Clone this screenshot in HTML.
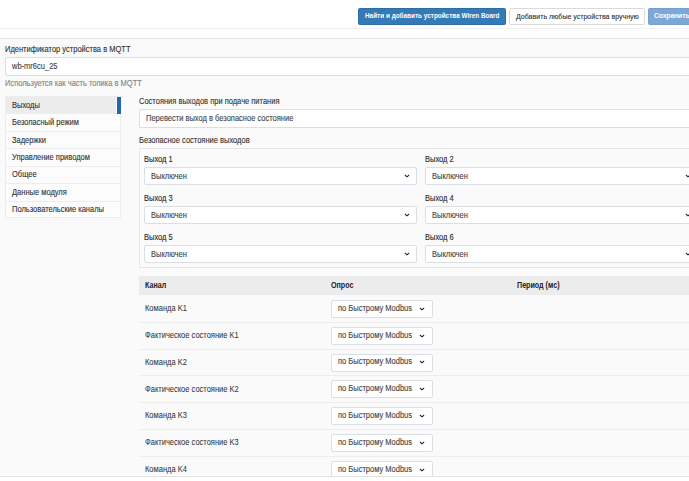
<!DOCTYPE html>
<html><head><meta charset="utf-8">
<style>
html,body{margin:0;padding:0;width:689px;height:481px;overflow:hidden;background:#fff;}
body{position:relative;font-family:"Liberation Sans",sans-serif;color:#333;}
.bx{position:absolute;}
.t{position:absolute;white-space:nowrap;font-size:8.3px;line-height:10px;transform:scaleX(0.905);transform-origin:0 0;-webkit-text-stroke:0.12px currentColor;}
.btn{position:absolute;top:8px;height:17px;box-sizing:border-box;border:1px solid;border-radius:1.5px;}
.inp{position:absolute;box-sizing:border-box;background:#fff;border:1px solid #dadfe5;border-radius:2px;}
.chev{position:absolute;}
</style></head>
<body>
<div class="bx" style="left:0;top:28px;width:689px;height:1px;background:#f1f1f1"></div>
<div class="bx" style="left:0;top:38px;width:689px;height:1px;background:#e6e6e6"></div>
<div class="bx" style="left:0;top:39px;width:689px;height:436px;background:#fafafa"></div>
<div class="bx" style="left:0;top:476px;width:689px;height:1px;background:#e0e0e0"></div>
<div class="btn" style="left:358px;width:148px;background:#337ab7;border-color:#2e6da4;"></div>
<div class="t" style="left:364.8px;top:11.36px;color:#fff;font-weight:bold;font-size:7.9px;transform:scaleX(0.81);-webkit-text-stroke:0">Найти и добавить устройства Wiren Board</div>
<div class="btn" style="left:509px;width:136px;background:#fff;border-color:#dadada;"></div>
<div class="t" style="left:515.6px;top:11.77px;color:#333;font-size:7.6px;transform:scaleX(0.925)">Добавить любые устройства вручную</div>
<div class="btn" style="left:648px;width:60px;background:#7ea7d3;border-color:#74a0cf;"></div>
<div class="t" style="left:654px;top:11.36px;color:#fff;font-weight:bold;font-size:7.9px;transform:scaleX(0.84);-webkit-text-stroke:0">Сохранить</div>
<div class="t" style="left:5px;top:44.32px;">Идентификатор устройства в MQTT</div>
<div class="inp" style="left:5px;top:57px;width:720px;height:19px;"></div>
<div class="t" style="left:12px;top:60.72px;color:#444">wb-mr6cu_25</div>
<div class="t" style="left:5px;top:77.82px;color:#838383">Используется как часть топика в MQTT</div>
<div class="bx" style="left:5px;top:96px;width:116px;height:122px;box-sizing:border-box;border:1px solid #ededed;background:#fcfcfc"></div>
<div class="bx" style="left:6px;top:97px;width:110px;height:16.4px;background:#ececec"></div>
<div class="t" style="left:11.6px;top:99.62px;">Выходы</div>
<div class="bx" style="left:6px;top:113.4px;width:114px;height:1px;background:#ededed"></div>
<div class="t" style="left:11.6px;top:117.07px;">Безопасный режим</div>
<div class="bx" style="left:6px;top:130.9px;width:114px;height:1px;background:#ededed"></div>
<div class="t" style="left:11.6px;top:134.52px;">Задержки</div>
<div class="bx" style="left:6px;top:148.3px;width:114px;height:1px;background:#ededed"></div>
<div class="t" style="left:11.6px;top:151.97px;">Управление приводом</div>
<div class="bx" style="left:6px;top:165.7px;width:114px;height:1px;background:#ededed"></div>
<div class="t" style="left:11.6px;top:169.42px;">Общее</div>
<div class="bx" style="left:6px;top:183.2px;width:114px;height:1px;background:#ededed"></div>
<div class="t" style="left:11.6px;top:186.87px;">Данные модуля</div>
<div class="bx" style="left:6px;top:200.6px;width:114px;height:1px;background:#ededed"></div>
<div class="t" style="left:11.6px;top:204.32px;">Пользовательские каналы</div>
<div class="bx" style="left:117px;top:96.5px;width:3.8px;height:17.3px;background:#2166ae"></div>
<div class="t" style="left:139px;top:95.82px;">Состояния выходов при подаче питания</div>
<div class="inp" style="left:139px;top:109px;width:600px;height:19px;"></div>
<div class="t" style="left:146px;top:112.82px;color:#444">Перевести выход в безопасное состояние</div>
<div class="t" style="left:139px;top:135.02px;">Безопасное состояние выходов</div>
<div class="bx" style="left:139px;top:148px;width:564px;height:120px;box-sizing:border-box;border:1px solid #e3e6ea;"></div>
<div class="t" style="left:144.2px;top:153.82px;color:#2a2a2a">Выход 1</div>
<div class="inp" style="left:144px;top:167px;width:273px;height:18px;"></div>
<div class="t" style="left:150.8px;top:170.72px;color:#444">Выключен</div>
<svg class="chev" style="left:403.7px;top:174.3px" width="6" height="4" viewBox="0 0 6 4"><path d="M0.9 1 L3 2.9 L5.1 1" stroke="#1f2a40" stroke-width="1.05" fill="none"/></svg>
<div class="t" style="left:425.2px;top:153.82px;color:#2a2a2a">Выход 2</div>
<div class="inp" style="left:425px;top:167px;width:272px;height:18px;"></div>
<div class="t" style="left:431.8px;top:170.72px;color:#444">Выключен</div>
<svg class="chev" style="left:684.7px;top:174.3px" width="6" height="4" viewBox="0 0 6 4"><path d="M0.9 1 L3 2.9 L5.1 1" stroke="#1f2a40" stroke-width="1.05" fill="none"/></svg>
<div class="t" style="left:144.2px;top:192.82px;color:#2a2a2a">Выход 3</div>
<div class="inp" style="left:144px;top:206px;width:273px;height:18px;"></div>
<div class="t" style="left:150.8px;top:209.72px;color:#444">Выключен</div>
<svg class="chev" style="left:403.7px;top:213.3px" width="6" height="4" viewBox="0 0 6 4"><path d="M0.9 1 L3 2.9 L5.1 1" stroke="#1f2a40" stroke-width="1.05" fill="none"/></svg>
<div class="t" style="left:425.2px;top:192.82px;color:#2a2a2a">Выход 4</div>
<div class="inp" style="left:425px;top:206px;width:272px;height:18px;"></div>
<div class="t" style="left:431.8px;top:209.72px;color:#444">Выключен</div>
<svg class="chev" style="left:684.7px;top:213.3px" width="6" height="4" viewBox="0 0 6 4"><path d="M0.9 1 L3 2.9 L5.1 1" stroke="#1f2a40" stroke-width="1.05" fill="none"/></svg>
<div class="t" style="left:144.2px;top:231.82px;color:#2a2a2a">Выход 5</div>
<div class="inp" style="left:144px;top:245px;width:273px;height:18px;"></div>
<div class="t" style="left:150.8px;top:248.72px;color:#444">Выключен</div>
<svg class="chev" style="left:403.7px;top:252.3px" width="6" height="4" viewBox="0 0 6 4"><path d="M0.9 1 L3 2.9 L5.1 1" stroke="#1f2a40" stroke-width="1.05" fill="none"/></svg>
<div class="t" style="left:425.2px;top:231.82px;color:#2a2a2a">Выход 6</div>
<div class="inp" style="left:425px;top:245px;width:272px;height:18px;"></div>
<div class="t" style="left:431.8px;top:248.72px;color:#444">Выключен</div>
<svg class="chev" style="left:684.7px;top:252.3px" width="6" height="4" viewBox="0 0 6 4"><path d="M0.9 1 L3 2.9 L5.1 1" stroke="#1f2a40" stroke-width="1.05" fill="none"/></svg>
<div class="bx" style="left:139px;top:275.6px;width:558px;height:19.6px;background:#ececec"></div>
<div class="t" style="left:144.8px;top:280.42px;font-weight:bold;color:#222;font-size:8.3px;transform:scaleX(0.86);-webkit-text-stroke:0">Канал</div>
<div class="t" style="left:330.6px;top:280.42px;font-weight:bold;color:#222;font-size:8.3px;transform:scaleX(0.86);-webkit-text-stroke:0">Опрос</div>
<div class="t" style="left:516.6px;top:280.42px;font-weight:bold;color:#222;font-size:8.3px;transform:scaleX(0.86);-webkit-text-stroke:0">Период (мс)</div>
<div class="t" style="left:144.6px;top:303.22px;-webkit-text-stroke:0.05px currentColor">Команда K1</div>
<div class="inp" style="left:331px;top:300.0px;width:102px;height:18px;"></div>
<div class="t" style="left:338px;top:302.72px;color:#444">по Быстрому Modbus</div>
<svg class="chev" style="left:419.0px;top:306.8px" width="6" height="4" viewBox="0 0 6 4"><path d="M0.9 1 L3 2.9 L5.1 1" stroke="#1f2a40" stroke-width="1.05" fill="none"/></svg>
<div class="bx" style="left:139px;top:321.8px;width:558px;height:1px;background:#eeeeee"></div>
<div class="t" style="left:144.6px;top:330.02px;-webkit-text-stroke:0.05px currentColor">Фактическое состояние K1</div>
<div class="inp" style="left:331px;top:326.8px;width:102px;height:18px;"></div>
<div class="t" style="left:338px;top:329.52px;color:#444">по Быстрому Modbus</div>
<svg class="chev" style="left:419.0px;top:333.6px" width="6" height="4" viewBox="0 0 6 4"><path d="M0.9 1 L3 2.9 L5.1 1" stroke="#1f2a40" stroke-width="1.05" fill="none"/></svg>
<div class="bx" style="left:139px;top:348.6px;width:558px;height:1px;background:#eeeeee"></div>
<div class="t" style="left:144.6px;top:356.82px;-webkit-text-stroke:0.05px currentColor">Команда K2</div>
<div class="inp" style="left:331px;top:353.6px;width:102px;height:18px;"></div>
<div class="t" style="left:338px;top:356.32px;color:#444">по Быстрому Modbus</div>
<svg class="chev" style="left:419.0px;top:360.4px" width="6" height="4" viewBox="0 0 6 4"><path d="M0.9 1 L3 2.9 L5.1 1" stroke="#1f2a40" stroke-width="1.05" fill="none"/></svg>
<div class="bx" style="left:139px;top:375.4px;width:558px;height:1px;background:#eeeeee"></div>
<div class="t" style="left:144.6px;top:383.62px;-webkit-text-stroke:0.05px currentColor">Фактическое состояние K2</div>
<div class="inp" style="left:331px;top:380.4px;width:102px;height:18px;"></div>
<div class="t" style="left:338px;top:383.12px;color:#444">по Быстрому Modbus</div>
<svg class="chev" style="left:419.0px;top:387.2px" width="6" height="4" viewBox="0 0 6 4"><path d="M0.9 1 L3 2.9 L5.1 1" stroke="#1f2a40" stroke-width="1.05" fill="none"/></svg>
<div class="bx" style="left:139px;top:402.2px;width:558px;height:1px;background:#eeeeee"></div>
<div class="t" style="left:144.6px;top:410.42px;-webkit-text-stroke:0.05px currentColor">Команда K3</div>
<div class="inp" style="left:331px;top:407.2px;width:102px;height:18px;"></div>
<div class="t" style="left:338px;top:409.92px;color:#444">по Быстрому Modbus</div>
<svg class="chev" style="left:419.0px;top:414.0px" width="6" height="4" viewBox="0 0 6 4"><path d="M0.9 1 L3 2.9 L5.1 1" stroke="#1f2a40" stroke-width="1.05" fill="none"/></svg>
<div class="bx" style="left:139px;top:429.0px;width:558px;height:1px;background:#eeeeee"></div>
<div class="t" style="left:144.6px;top:437.22px;-webkit-text-stroke:0.05px currentColor">Фактическое состояние K3</div>
<div class="inp" style="left:331px;top:434.0px;width:102px;height:18px;"></div>
<div class="t" style="left:338px;top:436.72px;color:#444">по Быстрому Modbus</div>
<svg class="chev" style="left:419.0px;top:440.8px" width="6" height="4" viewBox="0 0 6 4"><path d="M0.9 1 L3 2.9 L5.1 1" stroke="#1f2a40" stroke-width="1.05" fill="none"/></svg>
<div class="bx" style="left:139px;top:455.8px;width:558px;height:1px;background:#eeeeee"></div>
<div class="t" style="left:144.6px;top:464.02px;-webkit-text-stroke:0.05px currentColor">Команда K4</div>
<div class="inp" style="left:331px;top:460.8px;width:102px;height:18px;"></div>
<div class="t" style="left:338px;top:463.52px;color:#444">по Быстрому Modbus</div>
<svg class="chev" style="left:419.0px;top:467.6px" width="6" height="4" viewBox="0 0 6 4"><path d="M0.9 1 L3 2.9 L5.1 1" stroke="#1f2a40" stroke-width="1.05" fill="none"/></svg>
<div class="bx" style="left:0;top:475px;width:689px;height:6px;background:#fff;border-top:1px solid #e0e0e0;box-sizing:border-box;top:476px;height:5px"></div>
</body></html>
